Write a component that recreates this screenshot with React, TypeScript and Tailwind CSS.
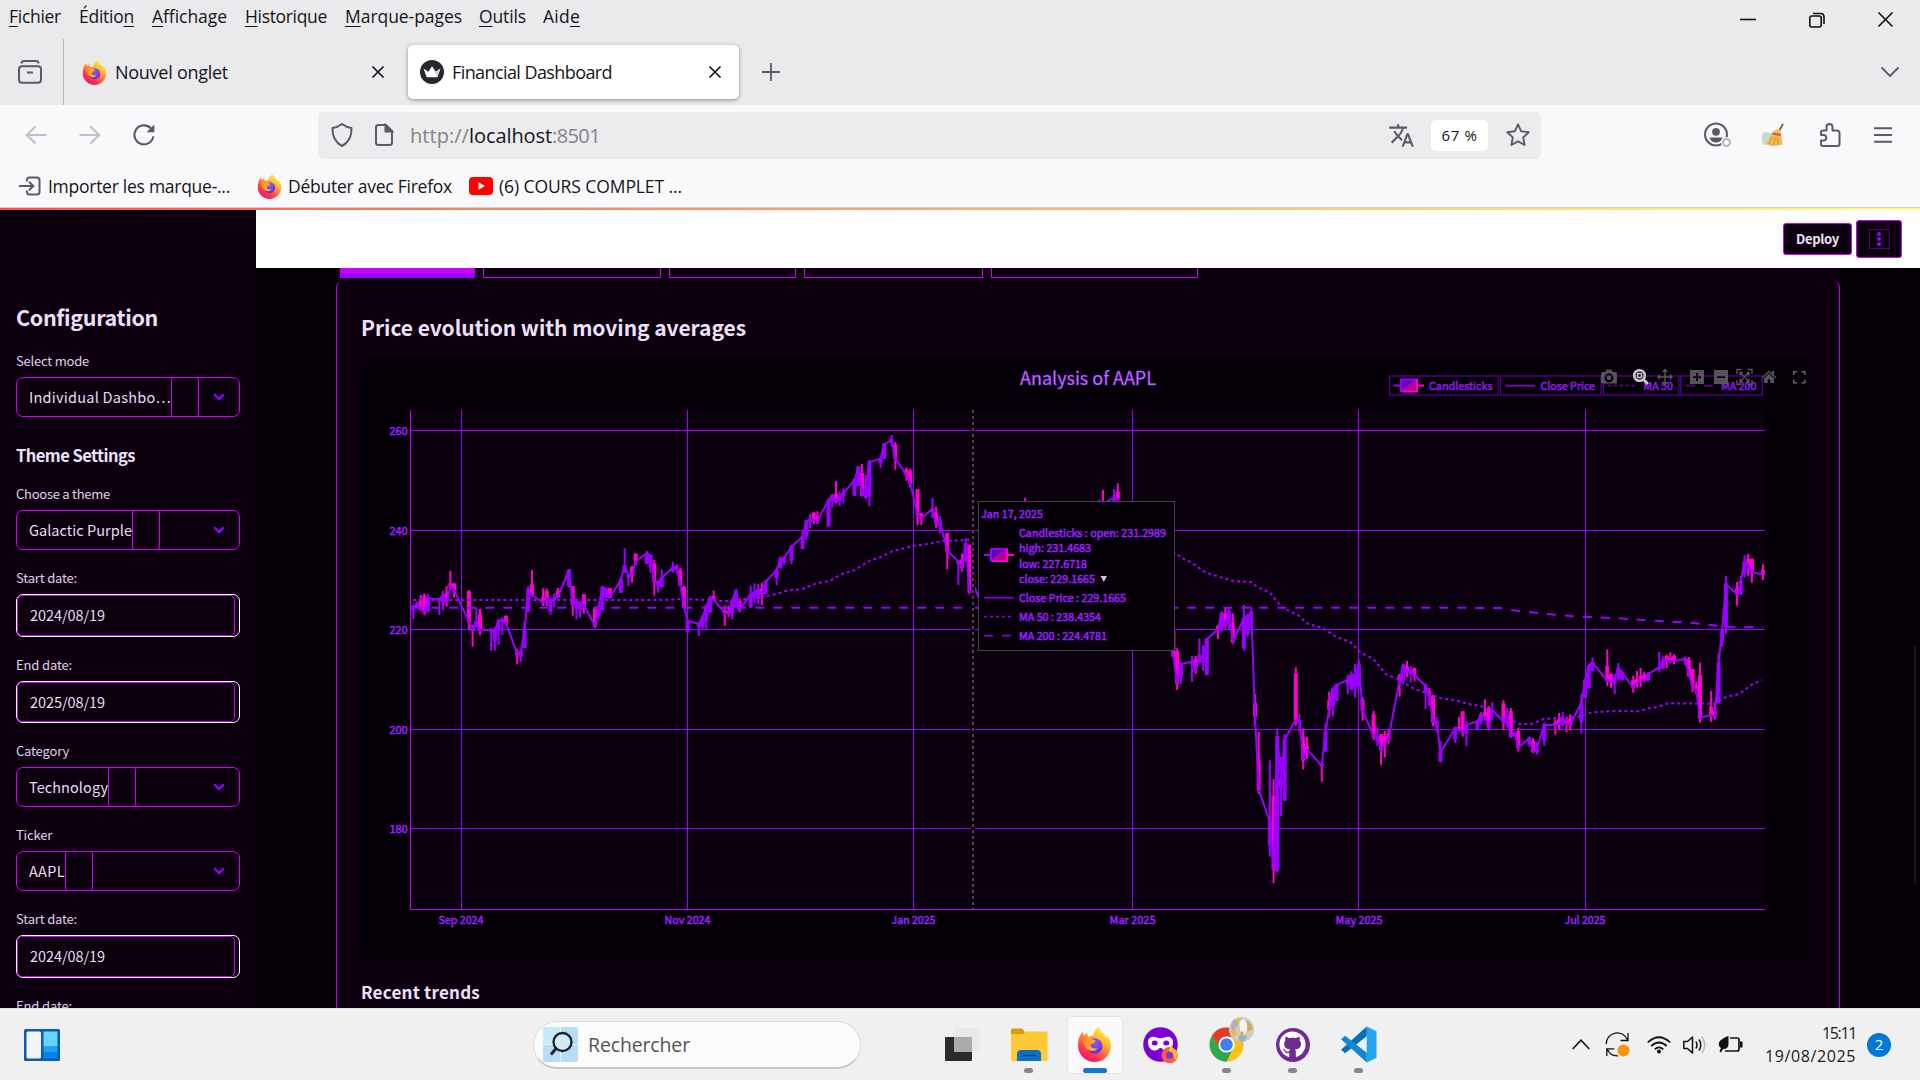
import React, { useLayoutEffect, useRef, useState } from "react";
import { MdTranslate } from "react-icons/md";
import { FaGithub } from "react-icons/fa";

/* ---------- text helper: spreads letters so a label fills a given width ---------- */

type LabelProps = { text: string; w: number; className?: string; accel?: number };

function Label({ text, w, className = "", accel }: LabelProps) {
  const ref = useRef<HTMLSpanElement>(null);
  const [spacing, setSpacing] = useState(0);
  useLayoutEffect(() => {
    if (ref.current) {
      const natural = ref.current.getBoundingClientRect().width;
      setSpacing((w - natural) / text.length);
    }
  }, [text, w]);
  return (
    <span ref={ref} className={"inline-block shrink-0 whitespace-pre " + className} style={{ letterSpacing: spacing }}>
      {accel === undefined ? (
        text
      ) : (
        <>
          {text.slice(0, accel)}
          <span className="underline decoration-1 underline-offset-[3px]">{text[accel]}</span>
          {text.slice(accel + 1)}
        </>
      )}
    </span>
  );
}

const ui = "font-['Open_Sans','Noto_Sans',sans-serif]";
const app = "font-['Noto_Sans_CJK_SC','Noto_Sans',sans-serif]";

/* ---------- logos ---------- */

function Firefox({ id, className }: { id: string; className: string }) {
  return (
    <svg viewBox="0 0 32 32" className={className}>
      <defs>
        <linearGradient id={id + "a"} x1="0.85" y1="0.05" x2="0.25" y2="1">
          <stop offset="0" stopColor="#fff44f" />
          <stop offset="0.3" stopColor="#ffc02e" />
          <stop offset="0.55" stopColor="#ff7139" />
          <stop offset="0.8" stopColor="#ff2b50" />
          <stop offset="1" stopColor="#e31587" />
        </linearGradient>
        <radialGradient id={id + "b"} cx="0.5" cy="0.3" r="0.8">
          <stop offset="0" stopColor="#9059ff" />
          <stop offset="0.6" stopColor="#7138e0" />
          <stop offset="1" stopColor="#592acb" />
        </radialGradient>
        <linearGradient id={id + "c"} x1="0" y1="0" x2="1" y2="0.6">
          <stop offset="0" stopColor="#ff8a2b" />
          <stop offset="1" stopColor="#ffb52e" />
        </linearGradient>
      </defs>
      <path
        fill={`url(#${id}a)`}
        d="M29.6 11.2c-.7-1.7-2.100-3.500-3.200-4.100.9 1.800 1.400 3.600 1.600 4.900C26.200 7.500 23.100 5.700 20.600 1.700c-.5-.8-.6-1.200-.7-1.700-3 1.700-4.700 5-4.900 7.700-1.500.1-2.900.6-4 1.500C9.500 8 9.300 6.500 9.700 5 8.200 5.700 7 6.800 6.200 7.700 5.600 7 5.600 4.600 5.700 4.200 3.500 5.700 1 10 1 17a15 15 0 0 0 30 0c0-2.300-.5-4-1.400-5.800z"
      />
      <circle cx="16.300" cy="17.500" r="7" fill={`url(#${id}b)`} />
      <path
        fill={`url(#${id}c)`}
        d="M5.500 10.500c2-1.500 4.300-1.700 6-.8 1.500-.7 2.700-1 4-.9-1.300.8-1.800 1.800-1.800 2.400.9.900 3 .8 3.400 1.100-.3 1.500-1.900 2-3.100 2.700-1 .7-.9 1.700-1.800 2 .8 2.400 4 3.500 6.800 2.200-1.400 2.600-5 3.700-8.200 1.900-3.600-2-5.600-6-5.300-10.600z"
      />
    </svg>
  );
}

function Chrome() {
  return (
    <svg viewBox="0 0 48 48" className="size-[37px]">
      <circle cx="24" cy="24" r="22" fill="#fbc116" />
      <path d="M24 14h19.600A22 22 0 0 1 24 46l8.700-17z" fill="#fbc116" />
      <path d="M4.950 13A22 22 0 0 1 43.600 14H24l-9 15z" fill="#e33b2e" />
      <path d="M4.950 13 15.300 29l17.400 0L24 46A22 22 0 0 1 4.950 13z" fill="#2da94f" />
      <circle cx="24" cy="24" r="10.500" fill="#fff" />
      <circle cx="24" cy="24" r="8.200" fill="#3f7fee" />
    </svg>
  );
}

/* ---------- browser chrome ---------- */

function MenuBar() {
  return (
    <div className={"flex h-[39px] items-start bg-[#eaeaed] pl-[9px] text-[17.500px] leading-[32px] text-[#15141a] " + ui}>
      <Label text="Fichier" w={52} accel={0} />
      <Label text="Édition" w={55} accel={6} className="ml-[18px]" />
      <Label text="Affichage" w={75} accel={0} className="ml-[18px]" />
      <Label text="Historique" w={82} accel={0} className="ml-[18px]" />
      <Label text="Marque-pages" w={117} accel={0} className="ml-[18px]" />
      <Label text="Outils" w={47} accel={0} className="ml-[17px]" />
      <Label text="Aide" w={37} accel={3} className="ml-[17px]" />
      <div className="flex-1" />
      <svg viewBox="0 0 160 24" className="mt-[8px] mr-[24px] h-6 w-40" fill="none" stroke="#111" strokeWidth="1.600">
        <path d="M4 11.500h16" />
        <rect x="73.800" y="8" width="11.400" height="11" rx="2" />
        <path d="M77 5.500h7.500q3.500 0 3.500 3.500v7" />
        <path d="M142.500 4.500 156.500 18.500M156.500 4.500 142.500 18.500" />
      </svg>
    </div>
  );
}

function TabClose() {
  return (
    <svg viewBox="0 0 14 14" className="size-[14px]" stroke="#15141a" strokeWidth="1.700" fill="none">
      <path d="M1.500 1.500 12.500 12.500M12.500 1.500 1.500 12.500" />
    </svg>
  );
}

function TabStrip() {
  return (
    <div className={"flex h-[66px] items-center bg-[#eaeaed] text-[18px] text-[#15141a] " + ui}>
      <svg viewBox="0 0 26 26" className="ml-[17px] h-[26px] w-[26px]" fill="none" stroke="#5b5b66" strokeWidth="2">
        <path d="M4.500 4.500q0-2.500 2.500-2.500h12q2.500 0 2.500 2.500" />
        <rect x="2" y="7.300" width="22" height="16.500" rx="3" />
        <path d="M10 13.500h6" />
      </svg>
      <div className="ml-[20px] h-full w-px bg-[#b5b5ba]" />
      <Firefox id="t" className="ml-[18px] size-[25px]" />
      <Label text="Nouvel onglet" w={113} className="ml-[8px]" />
      <div className="ml-[143px]">
        <TabClose />
      </div>
      <div className="ml-[23px] flex h-[54px] w-[331px] items-center rounded-[5px] bg-white shadow-[0_1px_4px_rgba(0,0,0,0.4)]">
        <svg viewBox="0 0 24 24" className="ml-[12px] size-6">
          <circle cx="12" cy="12" r="12" fill="#262730" />
          <path d="M3.500 8.500 8.300 11.800 12 6.300l3.700 5.500 4.800-3.300-3.200 8.700H6.700z" fill="#fff" />
          <path d="M12 6.300l3.700 5.500 4.800-3.300-3.200 8.700z" fill="#cfcfd4" />
        </svg>
        <Label text="Financial Dashboard" w={160} className="ml-[8px]" />
        <div className="ml-[96px]">
          <TabClose />
        </div>
      </div>
      <svg viewBox="0 0 18 18" className="ml-[23px] size-[18px]" stroke="#5b5b66" strokeWidth="1.800">
        <path d="M9 0v18M0 9h18" />
      </svg>
      <div className="flex-1" />
      <svg viewBox="0 0 20 12" className="mr-[20px] h-3 w-5" fill="none" stroke="#5b5b66" strokeWidth="1.800">
        <path d="M1.500 1.500 10 10 18.500 1.500" />
      </svg>
    </div>
  );
}

function Toolbar() {
  return (
    <div className={"flex h-[60px] items-center bg-[#f9f9fb] text-[#15141a] " + ui}>
      <svg viewBox="0 0 22 22" className="ml-[25px] size-[22px]" fill="none" stroke="#bebec4" strokeWidth="2">
        <path d="M21.500 11H1.500M10.500 2.500 1.800 11l8.700 8.500" />
      </svg>
      <svg viewBox="0 0 22 22" className="ml-[32px] size-[22px]" fill="none" stroke="#bebec4" strokeWidth="2">
        <path d="M.5 11h20M11.500 2.500 20.200 11l-8.700 8.500" />
      </svg>
      <svg viewBox="0 0 24 24" className="ml-[31px] size-[24px]" fill="none" stroke="#5b5b66" strokeWidth="2.100">
        <path d="M21.300 13.300A9.500 9.500 0 1 1 18.800 5.300L21 7.500" />
        <path d="M22.300 1.500v7.800h-7.800z" fill="#5b5b66" stroke="none" />
      </svg>
      <div className="ml-[162px] flex h-[47px] w-[1223px] items-center rounded-[6px] bg-[#ececee]">
        <svg viewBox="0 0 24 26" className="ml-[12px] h-[26px] w-6" fill="none" stroke="#5b5b66" strokeWidth="2">
          <path d="M12 2c3 2.300 6 3.500 9.500 4C21.800 14 18.500 20.500 12 24 5.500 20.500 2.200 14 2.500 6 6 5.500 9 4.300 12 2z" strokeLinejoin="round" />
        </svg>
        <svg viewBox="0 0 20 24" className="ml-[20px] h-6 w-5" fill="none" stroke="#5b5b66" strokeWidth="2">
          <path d="M4.500 2h7.500L18 8v11.500q0 2.500-2.500 2.500h-11Q2 22 2 19.500v-15Q2 2 4.500 2z" />
          <path d="M11.500 2v6.500H18z" fill="#5b5b66" />
        </svg>
        <span className="mt-[2px] ml-[16px] flex text-[20px] text-[#84838b]">
          <Label text="http://" w={59} />
          <Label text="localhost" w={83} className="text-[#15141a]" />
          <Label text=":8501" w={48} />
        </span>
        <div className="flex-1" />
        <MdTranslate className="size-[27px] text-[#5b5b66]" />
        <div className="ml-[16px] flex h-[31px] w-[57px] items-center justify-center rounded-[5px] bg-white text-[15px]">
          <Label text="67 %" w={36} />
        </div>
        <svg viewBox="0 0 26 26" className="mr-[10px] ml-[17px] size-[26px]" fill="none" stroke="#5b5b66" strokeWidth="1.900" strokeLinejoin="round">
          <path d="M13 2.300l3.200 7 7.500.9-5.500 5.200 1.400 7.600L13 19.300 6.400 23l1.400-7.600-5.500-5.200 7.500-.9z" />
        </svg>
      </div>
      <svg viewBox="0 0 28 26" className="ml-[162px] h-[26px] w-7" fill="none">
        <circle cx="13" cy="12.500" r="11" stroke="#5b5b66" strokeWidth="2" />
        <circle cx="13" cy="9.800" r="3.900" fill="#5b5b66" />
        <path d="M6.500 15.500h13q-1.500 5-6.500 5t-6.500-5z" fill="#5b5b66" />
        <circle cx="23.500" cy="20.500" r="5.500" fill="#f9f9fb" />
        <circle cx="23.500" cy="20.500" r="3.500" stroke="#b5b5bb" strokeWidth="2" />
      </svg>
      <svg viewBox="0 0 26 24" className="ml-[29px] h-6 w-[26px]">
        <path d="M4 9Q0 14 3 21.500l5 .5 5-12z" fill="#c4dcc8" />
        <path d="M23 1 19 8" stroke="#8a5a20" strokeWidth="1.800" />
        <path d="M18.500 6q-5 1-7 5T6 20.500q3 2.500 7 2.500t9.500-1.500Q22 14 20.500 7z" fill="#efbd50" />
        <path d="M8.500 21l4-7M13 22l2.500-7M18 22V15" stroke="#cf922c" strokeWidth="1" />
        <path d="M12.500 10.500l8 1.500" stroke="#e0484a" strokeWidth="1.900" />
      </svg>
      <svg viewBox="0 0 22 26" className="ml-[33px] h-[26px] w-[22px]" fill="none" stroke="#5b5b66" strokeWidth="2" strokeLinejoin="round">
        <path d="M2 10.500q0-2 2-2h3.500V5a3 3 0 0 1 6 0v3.500H18q2.500 0 2.500 2.500v11q0 2-2 2H4q-2 0-2-2v-3.500h3a2.800 2.800 0 0 0 0-5.500H2z" />
      </svg>
      <svg viewBox="0 0 18 16" className="ml-[33px] h-4 w-[18px]" stroke="#5b5b66" strokeWidth="1.900">
        <path d="M0 1.200h18M0 8h18M0 14.800h18" />
      </svg>
    </div>
  );
}

function Bookmarks() {
  return (
    <div className={"flex h-[42px] items-center bg-[#f9f9fb] text-[17.500px] text-[#15141a] " + ui}>
      <svg viewBox="0 0 22 20" className="ml-[19px] h-5 w-[22px]" fill="none" stroke="#5b5b66" strokeWidth="2">
        <path d="M8 5.500V4q0-2.500 2.500-2.500h7Q20.500 1.500 20.500 4v12q0 2.500-3 2.500h-7Q8 18.500 8 16v-1.500" />
        <path d="M0 10h14M10 5.800 14.300 10 10 14.200" />
      </svg>
      <Label text="Importer les marque-..." w={182} className="ml-[7px]" />
      <Firefox id="b" className="ml-[27px] size-[25px]" />
      <Label text="Débuter avec Firefox" w={164} className="ml-[6px]" />
      <svg viewBox="0 0 24 18" className="ml-[17px] h-[18px] w-6">
        <rect width="24" height="18" rx="4" fill="#f00" />
        <path d="M9.500 5.200v7.600l6.500-3.800z" fill="#fff" />
      </svg>
      <Label text="(6) COURS COMPLET ..." w={183} className="ml-[6px]" />
    </div>
  );
}

/* ---------- sidebar ---------- */

function FieldLabel({ text, w }: { text: string; w: number }) {
  return (
    <div className="mb-[7px] h-[19px] text-[13px] leading-[19px] text-[#e0d0ee]">
      <Label text={text} w={w} />
    </div>
  );
}

function SelectField({ label, labelW, value, valueW }: { label: string; labelW: number; value: string; valueW: number }) {
  return (
    <div>
      <FieldLabel text={label} w={labelW} />
      <div className="flex h-10 w-[224px] items-center rounded-[7px] border border-[#cc00ff] pl-[12px]">
        <Label text={value} w={valueW + 1} className="text-[14.500px] leading-[20px] text-[#e9dcf5]" />
        <div className="-my-px h-10 w-[28px] shrink-0 rounded-[3px] border border-[#cc00ff]" />
        <div className="flex-1" />
        <svg viewBox="0 0 12 8" className="mr-[14px] h-2 w-3" fill="none" stroke="#9900ff" strokeWidth="2.400" strokeLinecap="round">
          <path d="M2 2l4 4 4-4" />
        </svg>
      </div>
    </div>
  );
}

function DateField({ label, labelW, value, short }: { label: string; labelW: number; value: string; short?: boolean }) {
  return (
    <div>
      <FieldLabel text={label} w={labelW} />
      <div className={"w-[224px] rounded-[7px] border border-white " + (short ? "h-[42px]" : "h-[43px]")}>
        <div className="flex h-full w-[218px] items-center rounded-[5px] border border-[#cc00ff] pl-[12px]">
          <Label text={value} w={75} className="-mt-px text-[14.500px] leading-[20px] text-[#e9dcf5]" />
        </div>
      </div>
    </div>
  );
}

function Sidebar() {
  return (
    <div className={"flex h-[798px] w-[256px] shrink-0 flex-col overflow-hidden bg-[#0c000e] pl-4 " + app}>
      <div className="mt-[91px] h-8 shrink-0 text-[21.500px] leading-[32px] font-semibold text-[#eee0fb]">
        <Label text="Configuration" w={142} />
      </div>
      <div className="mt-[18px] flex shrink-0 flex-col">
        <SelectField label="Select mode" labelW={73} value="Individual Dashbo…" valueW={141} />
        <div className="mt-[26px] h-6 text-[16.500px] leading-[24px] font-semibold text-[#eee0fb]">
          <Label text="Theme Settings" w={119} />
        </div>
        <div className="mt-[17px] flex flex-col gap-[18px]">
          <SelectField label="Choose a theme" labelW={94} value="Galactic Purple" valueW={102} />
          <DateField label="Start date:" labelW={61} value="2024/08/19" />
          <DateField label="End date:" labelW={56} value="2025/08/19" short />
          <SelectField label="Category" labelW={53} value="Technology" valueW={78} />
          <SelectField label="Ticker" labelW={36} value="AAPL" valueW={35} />
          <DateField label="Start date:" labelW={61} value="2024/08/19" />
          <DateField label="End date:" labelW={56} value="2025/08/19" short />
        </div>
      </div>
    </div>
  );
}

/* ---------- chart data ---------- */

const X0 = 413.3;
const DAY = 3.708;

/* Each row: day, high, body top, body bottom, low, direction. Heights are thirds of a pixel below a block's base line. */
const BLOCKS: { base: number; rows: string }[] = [
  {
    base: 380,
    rows: `0 675 680 690 718 u|1 665 672 682 685 u|2 645 660 688 690 d|3 640 648 696 706 d|4 642 655 690 698 u|7 655 658 662 705 u|8 633 645 665 690 u|9 618 640 665 680 d|10 573 612 618 630 d|11 610 612 630 653 d|15 630 636 725 748 d|16 735 740 750 800 d|17 683 725 740 745 u|18 687 703 750 766 d|21 745 750 754 812 u|22 742 750 782 812 u|23 718 722 750 795 u|24 712 720 724 765 u|25 706 710 728 735 d|28 806 818 822 853 d|29 808 815 830 845 u|30 724 752 802 803 u|31 618 630 693 695 u|32 570 615 645 650 d|35 625 655 668 678 d|36 626 635 655 678 d|37 655 665 692 704 u|38 640 655 660 682 u|39 624 635 650 655 d|42 568 570 618 622 u|43 618 620 673 707 d|44 655 665 685 718 u|45 662 670 688 713 u|46 643 645 675 700 d|49 680 690 738 743 d|50 675 680 705 716 u|51 618 622 688 692 u|52 622 628 650 656 u|53 624 626 652 655 d|56 590 600 636 638 u|57 505 558 575 580 u|58 580 585 592 617 u|59 558 563 585 608 d|60 520 523 543 556 d|63 513 520 548 552 u|64 524 527 560 578 u|65 540 553 605 647 d|66 602 607 615 638 u|67 568 594 619 623 u|70 545 563 572 578 u|71 552 560 566 580 u|72 563 573 614 617 d|73 618 622 680 684 d|74 718 722 753 758 u|77 725 732 738 768 u|78 706 712 740 750 u|79 675 680 722 747 u|80 648 655 695 699 u|81 632 650 658 662 d|84 676 693 700 738 d|85 677 695 700 711 d|86 657 662 698 718 u|87 628 634 680 685 u|88 655 663 688 696 d|91 617 643 680 684 u|92 610 637 650 670 u|93 612 630 655 672 u|94 608 628 640 675 d|95 600 605 640 643 u|98 562 570 592 615 u|99 530 536 562 566 u|100 528 535 545 555 u|102 495 500 540 552 u|105 450 470 505 507 u|106 420 424 468 480 u|107 402 418 424 444 u|108 395 400 418 431 d|109 394 410 422 432 d|112 355 360 437 440 u|113 342 347 362 383 u|114 303 343 365 370 d|115 334 348 362 378 u|116 325 340 348 370 u|119 295 300 345 348 u|120 258 262 316 318 u|121 252 280 345 348 d|122 285 318 350 357 u|123 240 246 347 378 u|126 230 236 247 263 u|127 189 193 234 237 u|129 165 180 185 200 u|130 186 195 235 269 d|133 263 270 285 302 d|134 266 275 310 322 d`,
  },
  {
    base: 360,
    rows: `136 387 390 465 495 d|137 460 462 475 495 d|140 414 447 455 475 u|141 440 460 490 503 d|142 468 484 495 520 u|144 519 521 572 628 d|147 600 604 610 675 u|148 580 600 622 635 d|149 535 552 603 607 u|150 553 557 697 700 d|151 639 641 673 695 d|155 700 740 780 800 d|165 413 430 560 570 d|185 418 430 450 460 u|186 390 428 432 450 d|189 387 412 430 440 u|190 370 397 417 424 d|205 800 815 888 893 d|206 865 875 970 990 d|207 907 912 950 972 u|210 888 905 910 965 u|211 888 900 928 942 d|212 835 885 908 908 u|213 855 895 905 932 u|214 833 838 943 945 u|217 795 800 808 837 d|218 756 760 808 815 u|219 744 762 795 806 d|220 742 755 790 807 u|221 760 790 845 851 d|224 735 775 863 872 u|225 762 768 820 832 u|226 740 757 800 803 u`,
  },
  {
    base: 560,
    rows: `227 402 430 468 495 d|228 516 603 688 702 d|231 601 785 855 890 u|232 657 710 926 970 d|233 505 530 932 935 u|234 590 655 680 768 u|235 522 540 720 724 u|238 322 342 478 497 d|239 462 482 487 516 u|240 505 535 600 628 d|241 531 560 568 597 d|245 610 613 617 665 d|246 490 516 572 575 u|247 395 423 447 471 d|248 383 387 440 470 u|249 370 375 420 423 u|252 344 360 372 403 u|253 334 345 387 390 u|254 312 345 382 413 u|255 298 315 380 382 u|256 411 421 450 482 d|259 453 465 530 540 d|260 504 530 540 557 u|261 522 525 568 615 d|262 513 530 548 592 d|263 508 522 535 551 d|266 343 346 360 410 d|267 312 316 360 373 u|268 303 322 335 351 d|269 318 330 340 367 u|270 323 326 345 364 d|273 370 378 397 447 u|274 384 395 406 437 d|275 405 410 485 498 d|276 470 484 500 515 u|277 543 578 603 607 u|281 500 505 535 549 u|282 471 503 508 513 d|283 454 456 515 530 d|284 483 495 520 557 u|287 480 484 505 510 u|288 456 463 485 494 u|289 418 458 470 482 d|290 438 445 500 509 d|291 426 450 455 480 u|294 421 432 485 508 d|295 444 470 490 503 u|296 444 455 528 534 d|297 515 518 528 530 u|298 504 515 563 574 d|301 530 535 550 560 u|302 534 545 574 580 d|303 546 568 575 584 u|305 487 494 540 557 u|308 478 490 495 524 d|309 459 480 492 508 d|310 456 478 492 500 u|311 472 485 490 517 d|312 463 478 494 511 d|315 402 430 483 521 u|316 356 361 412 414 u|317 312 318 382 388 u|318 292 308 330 333 u|322 268 320 362 378 d|323 340 345 362 383 d|324 343 355 370 402 u|325 309 325 355 360 u|326 330 338 358 362 u|329 347 362 382 398 d|330 333 360 368 382 d|331 324 350 360 382 d|332 335 345 360 366 d|333 336 343 358 365 u|336 276 322 327 335 u|337 289 300 322 328 u|338 284 290 300 324 d|339 277 296 302 310 d|340 283 290 303 312 d|343 290 297 302 315 u|344 291 300 347 350 d|345 327 330 375 396 d|346 365 378 390 403 d|347 308 347 473 488 d|350 393 442 465 486 d|351 432 455 470 478 d|352 282 310 428 430 u|353 205 210 245 262 u|354 48 72 200 222 u|357 66 87 103 137 d|358 48 65 100 105 u|359 -15 7 40 53 u|360 -18 -2 15 47 d|361 -3 -2 37 68 d|364 13 33 43 60 d`,
  },
];

type Candle = { x: number; high: number; top: number; bottom: number; low: number; up: boolean };

const CANDLES: Candle[] = BLOCKS.flatMap(({ base, rows }) =>
  rows.split("|").map((row) => {
    const p = row.split(" ");
    const y = (i: number) => base + Number(p[i]) / 3;
    return { x: X0 + Number(p[0]) * DAY, high: y(1), top: y(2), bottom: y(3), low: y(4), up: p[5] === "u" };
  }),
);

const closeLine = CANDLES.map((c) => `${c.x.toFixed(1)},${(c.up ? c.top : c.bottom).toFixed(1)}`).join(" ");

function trace(ox: number, oy: number, sx: number, pts: string) {
  return pts
    .split(" ")
    .map((p) => p.split(",").map(Number))
    .map(([x, y]) => `${(ox + x / sx).toFixed(1)},${(oy + y / 3).toFixed(1)}`)
    .join(" ");
}

const ma50 = [
  trace(400, 380, 3, "40,660 790,660 850,657 920,660 960,663 1000,663 1050,655 1100,648 1130,642 1160,632 1207,627 1250,610 1290,602 1330,580 1363,571 1380,560 1410,541 1441,532 1474,515 1495,509 1530,500"),
  trace(880, 360, 3, "100,558 155,550 190,543 260,540 295,533 600,450 800,500 885,578 905,594 930,605 978,638 1060,663 1113,666 1130,680 1170,698 1205,742 1255,766 1280,790 1330,805 1370,832 1410,845 1440,876 1480,897 1520,945 1556,958"),
  trace(1160, 560, 2.529, "612,365 640,385 680,402 710,415 745,420 780,432 810,437 850,465 885,480 910,492 940,492 970,477 1000,475 1060,470 1092,457 1150,453 1212,454 1235,445 1260,440 1285,430 1400,431 1430,412 1465,402 1495,375 1522,360"),
].join(" ");

const ma200 = [
  "413.3,607.7",
  trace(1160, 560, 2.529, "700,143 860,144 900,152 980,162 1040,168 1085,171 1160,175 1230,181 1340,188 1430,200 1450,202 1525,201"),
].join(" ");

const P = "#9900ff";
const K = "#ff00cc";

function CandleKey({ x, y, h }: { x: number; y: number; h: number }) {
  return (
    <g>
      <path d={`M${x} ${y}h7`} stroke={P} strokeWidth="2" />
      <path d={`M${x + 23} ${y}h7`} stroke={K} strokeWidth="2" />
      <path d={`M${x + 7} ${y + h / 2 - 1}V${y - h / 2 + 1}h16z`} fill="#6600b3" stroke={P} strokeWidth="2" strokeLinejoin="round" />
      <path d={`M${x + 7} ${y + h / 2 - 1}h16V${y - h / 2 + 1}z`} fill="#b3008f" />
      <path d={`M${x + 8} ${y + h / 2 - 1}h15V${y - h / 2 + 1}`} fill="none" stroke={K} strokeWidth="2" />
    </g>
  );
}

function ModeBar() {
  return (
    <g fill="#585458">
      <path fillRule="evenodd" d="M1601 373.500q0-1.500 1.500-1.500h3l1.200-2.500h4.600l1.200 2.500h3q1.500 0 1.500 1.500v8.500q0 1.500-1.500 1.500h-13q-1.500 0-1.500-1.500zM1609 373.300a4.500 4.500 0 1 0 .01 0zM1609 375.500a2.300 2.300 0 1 1-.01 0z" />
      <g fill="none" stroke="#cfc8d0">
        <circle cx="1639.500" cy="375.500" r="5.300" strokeWidth="2.600" />
        <path d="M1643.500 379.500 1648 384" strokeWidth="2.800" />
        <rect x="1637.500" y="373.500" width="4" height="4" strokeWidth="1.500" />
      </g>
      <path d="M1664.300 376.300v-4.300h-2.500l3.200-3.500 3.200 3.500h-2.500v4.300h4.300v-2.500l3 3.200-3 3.200v-2.500h-4.300v4.300h2.500l-3.200 3.500-3.200-3.500h2.500v-4.300h-4.300v2.500l-3-3.200 3-3.200v2.500z" />
      <path fillRule="evenodd" d="M1690 370h14v14h-14zM1696 373v3h-3v2h3v3h2v-3h3v-2h-3v-3z" />
      <path fillRule="evenodd" d="M1714 370h14v14h-14zM1717 376v2h8v-2z" />
      <path d="M1737 374v-4.500h4.500M1747.500 369.500h4.500v4.500M1752 380v4.500h-4.500M1741.500 384.500h-4.500V380M1740 372.500l9 9M1749 372.500l-9 9M1740 375v-2.500h2.500M1746.500 372.500h2.500v2.500M1749 379v2.500h-2.500M1742.500 381.500H1740V379" fill="none" stroke="#585458" strokeWidth="1.400" />
      <path d="M1761.500 377.500 1769 370.500l3 2.700V371h2v4l2.500 2.500-1 1-6.500-6-6.500 6zM1764 378.500l5-4.700 5 4.700v4.500h-3.700v-3.500h-2.600v3.500H1764z" />
      <path d="M1793.700 375v-3.300h3.300M1801.500 371.700h3.300v3.300M1804.800 379.500v3.300h-3.300M1797 382.800h-3.300v-3.300" fill="none" stroke="#6a666a" strokeWidth="1.500" />
    </g>
  );
}

function Chart() {
  const gx = [461.5, 687.5, 913.5, 1132.5, 1358.5, 1585.5];
  const gy = [430.5, 530.5, 629.5, 729.5, 828.5];
  const months: [string, number, number][] = [
    ["Sep 2024", 438.5, 45],
    ["Nov 2024", 664.5, 46],
    ["Jan 2025", 891.5, 44],
    ["Mar 2025", 1109.5, 46],
    ["May 2025", 1335.5, 47],
    ["Jul 2025", 1564.5, 41],
  ];
  const tip: [string, number, number, number][] = [
    ["Jan 17, 2025", 981, 518, 62],
    ["Candlesticks : open: 231.2989", 1019, 537, 147],
    ["high: 231.4683", 1019, 552, 72],
    ["low: 227.6718", 1019, 568, 68],
    ["close: 229.1665", 1019, 583, 76],
    ["Close Price : 229.1665", 1019, 602, 107],
    ["MA 50 : 238.4354", 1019, 621, 82],
    ["MA 200 : 224.4781", 1019, 640, 88],
  ];
  return (
    <svg viewBox="361 358 1454 601" className={"block h-[601px] w-[1454px] bg-[#050007] " + app}>
      <rect x="410" y="410" width="1355" height="499" fill="#0b000d" />
      <g stroke={P} strokeWidth="1">
        {gx.map((x) => (
          <path key={x} d={`M${x} 410V909`} />
        ))}
        {gy.map((y) => (
          <path key={y} d={`M410 ${y}H1765`} />
        ))}
      </g>
      <clipPath id="plot">
        <rect x="410" y="410" width="1355" height="499" />
      </clipPath>
      <g clipPath="url(#plot)">
        {CANDLES.map((c) => (
          <g key={c.x} fill={c.up ? P : K}>
            <rect x={c.x - 1} y={c.high} width="2" height={c.low - c.high} />
            <rect x={c.x - 2} y={c.top - 0.7} width="4" height={Math.max(c.bottom - c.top, 0) + 1.4} />
          </g>
        ))}
        <g fill="none" stroke={P}>
          <polyline points={closeLine} strokeWidth="2" />
          <polyline points={ma50} strokeWidth="2" strokeDasharray="3 3" />
          <polyline points={ma200} strokeWidth="2" strokeDasharray="9 9" />
        </g>
      </g>
      <path d="M410.500 410V909.500H1765" fill="none" stroke="#cc00ff" />

      <path d="M973 410V909" stroke="#0b000d" strokeWidth="4" />
      <path d="M973 410V909" stroke="#4a444c" strokeWidth="2" strokeDasharray="3 3" />

      <g fill="#9f26ff" stroke="#9b1cff" strokeWidth="0.500" fontSize="11">
        {["260", "240", "220", "200", "180"].map((t, i) => (
          <text key={t} x="389.500" y={gy[i] + 4.5} textLength="18">
            {t}
          </text>
        ))}
        {months.map(([t, x, w]) => (
          <text key={t} x={x} y="924" textLength={w} lengthAdjust="spacingAndGlyphs">
            {t}
          </text>
        ))}
      </g>

      <text x="1020" y="385" fontSize="18" fill="#c27dff" stroke="#a020ff" strokeWidth="0.400" textLength="136" lengthAdjust="spacingAndGlyphs">
        Analysis of AAPL
      </text>

      <g fill="none" stroke="#57008f" strokeWidth="1.300">
        <rect x="1389.500" y="376" width="108.500" height="19" />
        <rect x="1500.500" y="376" width="100.500" height="19" />
        <rect x="1603.500" y="376" width="75.500" height="19" />
        <rect x="1680.800" y="376" width="81.500" height="19" />
      </g>
      <CandleKey x={1394} y={385.5} h={14} />
      <g stroke="#8500dd" strokeWidth="1.700">
        <path d="M1505.500 385.700H1535" />
        <path d="M1608 385.700H1636" strokeDasharray="3 3" stroke="#5a0099" />
        <path d="M1686 385.700H1713" strokeDasharray="9 9" stroke="#5a0099" />
      </g>
      <g fill="#951ff0" stroke="#9018e8" strokeWidth="0.500" fontSize="11">
        <text x="1429" y="390" textLength="63.500" lengthAdjust="spacingAndGlyphs">Candlesticks</text>
        <text x="1540.500" y="390" textLength="54.500" lengthAdjust="spacingAndGlyphs">Close Price</text>
        <text x="1643.500" y="390" textLength="29.500" lengthAdjust="spacingAndGlyphs">MA 50</text>
        <text x="1721" y="390" textLength="35.500" lengthAdjust="spacingAndGlyphs">MA 200</text>
      </g>
      <ModeBar />

      <rect x="978.500" y="501.500" width="196" height="149" fill="#060008" stroke="#444" />
      <g fill="#9f26ff" stroke="#9b1cff" strokeWidth="0.500" fontSize="11">
        {tip.map(([t, x, y, w]) => (
          <text key={t} x={x} y={y} textLength={w} lengthAdjust="spacingAndGlyphs">
            {t}
          </text>
        ))}
      </g>
      <path d="M1100.500 576h6.500l-3.200 6z" fill="#d9b8ff" />
      <CandleKey x={984} y={555} h={14} />
      <g stroke="#8500dd" strokeWidth="1.700">
        <path d="M984 597.700H1014" />
        <path d="M984 616.700H1012" strokeDasharray="3 3" />
        <path d="M984 635.700H1012" strokeDasharray="9 9" />
      </g>
    </svg>
  );
}

/* ---------- main area ---------- */

function Main() {
  return (
    <div className={"flex h-[798px] w-[1664px] flex-col overflow-hidden bg-[#050007] " + app}>
      <div className="flex h-[58px] shrink-0 items-center bg-white">
        <div className="ml-[1527px] flex h-8 w-[69px] items-center justify-center rounded-[3px] border border-[#cc00ff] bg-[#0c000e] text-[13px] font-bold text-[#eee0fb]">
          <Label text="Deploy" w={43} className="-mt-px" />
        </div>
        <div className="ml-[4px] flex h-[38px] w-[46px] items-center justify-center rounded-[3px] border border-[#cc00ff] bg-[#0c000e]">
          <div className="flex h-[20px] w-[21px] flex-col items-center justify-center gap-px border border-[#4d0080]">
            <div className="size-1 rounded-full bg-[#9900ff]" />
            <div className="size-1 rounded-full bg-[#9900ff]" />
            <div className="size-1 rounded-full bg-[#9900ff]" />
          </div>
        </div>
      </div>
      <div className="flex flex-1">
        <div className="ml-[80px] flex w-[1504px] flex-col bg-[#0c000e]">
          <div className="flex h-[13px] gap-2 pl-[4px]">
            <div className="h-[10px] w-[135px] border-b-[5px] border-[#9900ff] bg-[#cc00ff]" />
            <div className="h-[10px] w-[178px] border border-t-0 border-[#cc00ff]" />
            <div className="h-[10px] w-[127px] border border-t-0 border-[#cc00ff]" />
            <div className="h-[10px] w-[179px] border border-t-0 border-[#cc00ff]" />
            <div className="h-[10px] w-[207px] border border-t-0 border-[#cc00ff]" />
          </div>
          <div className="flex flex-1 flex-col rounded-t-[6px] border-x border-[#b800e6] pl-[24px]">
            <div className="mt-[31px] h-[30px] text-[21px] leading-[30px] font-semibold text-[#eee0fb]">
              <Label text="Price evolution with moving averages" w={385} />
            </div>
            <div className="mt-[16px]">
              <Chart />
            </div>
            <div className="mt-[21px] h-[24px] text-[17px] leading-[24px] font-semibold text-[#eee0fb]">
              <Label text="Recent trends" w={119} />
            </div>
          </div>
        </div>
        <div className="mt-[378px] ml-[74px] h-[238px] w-[2px] bg-[#1b161d]" />
      </div>
    </div>
  );
}

/* ---------- taskbar ---------- */

function Dot() {
  return <div className="h-[5px] w-[9px] rounded-full bg-[#878787]" />;
}

function TaskIcon({ children, mark, active }: { children: React.ReactNode; mark?: React.ReactNode; active?: boolean }) {
  return (
    <div
      className={
        "flex h-[58px] w-[56px] flex-col items-center rounded-[5px] pt-[10px] " +
        (active ? "border border-[#e4e4e4] bg-[#fafafa]" : "border border-transparent")
      }
    >
      <div className="flex h-[36px] items-center justify-center">{children}</div>
      <div className="mt-[5px] flex h-[5px]">{mark}</div>
    </div>
  );
}

function Taskbar() {
  return (
    <div className={"flex h-[72px] items-center border-t border-[#e2e2e6] bg-[#f0f0f0] " + ui}>
      <svg viewBox="0 0 36 32" className="ml-[24px] h-8 w-9 shrink-0">
        <rect width="36" height="32" rx="1.500" fill="#0a5cb0" />
        <rect x="2.500" y="2.500" width="14.500" height="27" rx="1.500" fill="#f4f4f4" />
        <rect x="19.500" y="2.500" width="14" height="15" fill="#66d4ff" />
        <rect x="19.500" y="17.500" width="14" height="6" fill="#1da4fa" />
        <rect x="19.500" y="23.500" width="14" height="6" fill="#0584ee" />
      </svg>
      <div className="ml-[473px] flex h-[48px] w-[328px] shrink-0 items-center rounded-full border border-b-2 border-[#dcdcdc] border-b-[#c8c8c8] bg-[#fbfbfb]">
        <svg viewBox="0 0 35 35" className="ml-[9px] size-[35px]">
          <rect width="35" height="35" rx="2" fill="#b7dcf3" />
          <rect width="17" height="17" fill="#c3ecfb" />
          <path d="M17.500 0v35M0 17.500h35" stroke="#e2f4fd" strokeWidth="1.200" />
          <circle cx="19.500" cy="15" r="9" fill="#d3ebf8" stroke="#222" strokeWidth="2.300" />
          <path d="M13 21.500 8 27.500" stroke="#222" strokeWidth="2.800" />
        </svg>
        <Label text="Rechercher" w={102} className="mt-[2px] ml-[10px] text-[19.500px] text-[#555]" />
      </div>
      <div className="ml-[74px] flex shrink-0 gap-[9.950px]">
        <TaskIcon>
          <svg viewBox="0 0 36 36" className="size-9">
            <rect x="0" y="10" width="27" height="24" rx="1" fill="#2b2b2b" />
            <rect x="9" y="1" width="26" height="24" rx="1" fill="#e9e9e9" />
            <rect x="9" y="10" width="18" height="15" fill="#ababab" />
          </svg>
        </TaskIcon>
        <TaskIcon mark={<Dot />}>
          <svg viewBox="0 0 38 36" className="h-9 w-[38px]">
            <path d="M1 3q0-1.500 1.500-1.500h9.500L15 5v8H1z" fill="#dd9a0a" />
            <path d="M1 7h12l3-2.500h20q1.500 0 1.500 1.500v26.500q0 1.500-1.500 1.500h-33.500q-1.500 0-1.500-1.500z" fill="#fdc935" />
            <path d="M7 34V27q0-4 4-4h16q4 0 4 4v7z" fill="#0e6fc5" />
            <path d="M12 28.500h14" stroke="#0a4a8c" strokeWidth="1.500" />
          </svg>
        </TaskIcon>
        <TaskIcon active mark={<div className="h-[5px] w-[24px] rounded-full bg-[#0f78d4]" />}>
          <Firefox id="k" className="size-[35px]" />
        </TaskIcon>
        <TaskIcon>
          <svg viewBox="0 0 36 36" className="size-9">
            <circle cx="17.500" cy="17.500" r="17.300" fill="#7a00d6" />
            <path d="M5 15c0-5 5-6 8.500-4.500 2.500 1 5.500 1 8 0C25 9 30 10 30 15c0 6-3.500 8.500-7 8.500-3 0-3.500-2.500-5.500-2.500s-2.500 2.500-5.500 2.500C8.500 23.500 5 21 5 15z" fill="#fff" />
            <ellipse cx="11.700" cy="16" rx="3" ry="2.500" fill="#7a00d6" />
            <ellipse cx="23.300" cy="16" rx="3" ry="2.500" fill="#7a00d6" />
            <g transform="translate(18 19) scale(0.540)">
              <circle cx="16" cy="17" r="15" fill="#ff5a3c" />
              <path d="M20 0c-3 2-5 5-5 8l13 4C27 7 22 5 20 0z" fill="#ffc02e" />
              <path d="M28 8q5 10-2 18-4-12-12-18z" fill="#ffb52e" />
              <circle cx="16" cy="17" r="6.500" fill="#7138e0" />
            </g>
          </svg>
        </TaskIcon>
        <TaskIcon mark={<Dot />}>
          <div className="relative">
            <Chrome />
            <svg viewBox="0 0 24 24" className="absolute -top-[9px] left-[21px] size-[25px]">
              <circle cx="12" cy="12" r="12" fill="#cfcac2" />
              <path d="M5 2.200q4 1 3.500 6l-5 6Q0 9 5 2.200z" fill="#b9a6c9" />
              <path d="M8 1l4 1-2 5-3 1zM2 13l4-2 1 6-3 2z" fill="#d8bf4a" />
              <path d="M10 4l4-2 4 5-2 9-5 1z" fill="#f5f3ee" />
              <path d="M17 3q6 4 5 9l-4 2z" fill="#c9b052" />
              <path d="M9 18h9l-3 5.500h-5z" fill="#8db7cf" />
              <path d="M11 14h3v4h-3z" fill="#e8a32e" />
            </svg>
          </div>
        </TaskIcon>
        <TaskIcon mark={<Dot />}>
          <div className="flex size-[34px] items-center justify-center rounded-full bg-[#6e2c96]">
            <FaGithub className="size-[27px] text-white" />
          </div>
        </TaskIcon>
        <TaskIcon mark={<Dot />}>
          <svg viewBox="0 0 36 36" className="size-[37px]">
            <path d="M26 .5 35.500 5v26L26 35.500z" fill="#24a4ee" />
            <path d="M26 .5V10L5 26.500 1 23z" fill="#0072b8" />
            <path d="M26 35.500V26L5 9.500 1 13z" fill="#1089d0" />
          </svg>
        </TaskIcon>
      </div>
      <div className="flex-1" />
      <svg viewBox="0 0 18 11" className="h-[11px] w-[18px] shrink-0" fill="none" stroke="#111" strokeWidth="1.500">
        <path d="M.7 10 9 1.200 17.300 10" />
      </svg>
      <svg viewBox="0 0 25 25" className="ml-[15px] size-[25px] shrink-0" fill="none" stroke="#111" strokeWidth="1.300">
        <path d="M1.200 12A11 11 0 0 1 22.500 8M23 1v7.500h-7.500M13 23.800A11 11 0 0 1 2.200 17M1.800 24v-7.200h7.500" />
        <circle cx="18.500" cy="18.500" r="6" fill="#ff9500" stroke="none" />
      </svg>
      <svg viewBox="0 0 24 18" className="ml-[17px] h-[18px] w-6 shrink-0" fill="none" stroke="#111" strokeWidth="1.700">
        <path d="M.8 6.500Q12-4 23.200 6.500M4.300 10Q12 3 19.700 10M7.700 13.300Q12 9.500 16.300 13.300" />
        <circle cx="12" cy="15.500" r="2" fill="#111" stroke="none" />
      </svg>
      <svg viewBox="0 0 24 20" className="ml-[12px] h-5 w-6 shrink-0" fill="none" stroke="#111" strokeWidth="1.500">
        <path d="M.8 6.500h3.700L9.500 2v16l-5-4.500H.8zM13 6.500q2 3.500 0 7M16 4.500q3.500 5.500 0 11" strokeLinejoin="round" />
        <path d="M19 2q5.500 8 0 16" stroke="#b9b9b9" />
      </svg>
      <svg viewBox="0 0 25 17" className="ml-[11px] h-[17px] w-[25px] shrink-0" fill="none">
        <path d="M12 2h7q2 0 2 2v9q0 2-2 2H7" stroke="#111" strokeWidth="1.700" />
        <path d="M22 5.500h2.500v6H22z" fill="#111" />
        <path d="M10.500 0v8q0 5-5 5-1.500 1-2.500 3.500L1.500 15.500Q2 13.500 3 12 0 10 1 6.500 3 2.500 10.500 0z" fill="#111" />
      </svg>
      <div className="ml-[21px] flex w-[92px] shrink-0 flex-col items-end text-[16px] leading-[23px] text-[#1a1a1a]">
        <Label text="15:11" w={34} />
        <Label text="19/08/2025" w={91} />
      </div>
      <div className="mr-[29px] ml-[11px] flex size-6 shrink-0 items-center justify-center rounded-full bg-[#0078d7] text-[15px] text-white">2</div>
    </div>
  );
}

export default function App() {
  return (
    <div className="flex h-[1080px] w-[1920px] flex-col overflow-hidden bg-[#050007]">
      <MenuBar />
      <TabStrip />
      <Toolbar />
      <Bookmarks />
      <div className="h-px shrink-0 bg-[#ccccd1]" />
      <div className="h-[2px] shrink-0 bg-linear-to-r from-[#ff4b4b] to-[#fffd80]" />
      <div className="flex shrink-0">
        <Sidebar />
        <Main />
      </div>
      <Taskbar />
    </div>
  );
}
